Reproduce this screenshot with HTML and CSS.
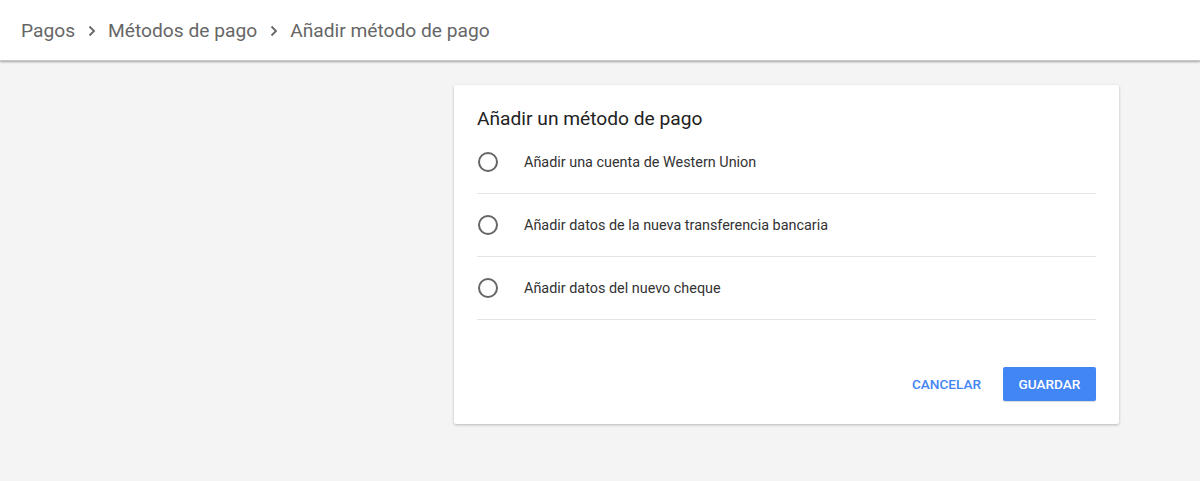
FILE: index.html
```html
<!DOCTYPE html>
<html lang="es">
<head>
<meta charset="utf-8">
<link rel="stylesheet" href="styles.css">
</head>
<body>
<header class="topbar">
  <nav class="crumbs">
    <span class="crumb">Pagos</span>
    <svg class="chev" width="8" height="12" viewBox="0 0 8 12"><path d="M1.5 1.5 L6 6 L1.5 10.5" fill="none" stroke="#666" stroke-width="1.8"/></svg>
    <span class="crumb">Métodos de pago</span>
    <svg class="chev" width="8" height="12" viewBox="0 0 8 12"><path d="M1.5 1.5 L6 6 L1.5 10.5" fill="none" stroke="#666" stroke-width="1.8"/></svg>
    <span class="crumb">Añadir método de pago</span>
  </nav>
</header>
<main class="main">
  <section class="card">
    <h1 class="title">Añadir un método de pago</h1>
    <ul class="options">
      <li class="option"><span class="radio"></span><span class="label">Añadir una cuenta de Western Union</span></li>
      <li class="option"><span class="radio"></span><span class="label">Añadir datos de la nueva transferencia bancaria</span></li>
      <li class="option"><span class="radio"></span><span class="label">Añadir datos del nuevo cheque</span></li>
    </ul>
    <div class="actions">
      <button class="btn btn-flat">CANCELAR</button>
      <button class="btn btn-primary">GUARDAR</button>
    </div>
  </section>
</main>
</body>
</html>
```
FILE: styles.css
```css
html, body {
  margin: 0;
  padding: 0;
  height: 100%;
}
body {
  background: #f4f4f4;
  font-family: Roboto, "Liberation Sans", Arial, sans-serif;
  color: #333;
}
.topbar {
  height: 60px;
  background: #fff;
  box-shadow: 0 1px 2px rgba(0,0,0,0.35);
  border-bottom: 1px solid #c8c8c8;
  display: flex;
  align-items: center;
  padding-left: 21px;
  position: relative;
  z-index: 1;
}
.crumbs {
  display: flex;
  align-items: center;
  font-size: 19.2px;
  color: #666;
}
.chev {
  margin: 1px 12px 0 13px;
}
.main {
  padding: 24px 0 0 454px;
}
.card {
  width: 619px;
  background: #fff;
  padding: 22px 23px 23px 23px;
  box-shadow: 0 1px 3px rgba(0,0,0,0.25);
  border-radius: 2px;
}
.title {
  margin: 0;
  font-size: 19.2px;
  line-height: 24px;
  font-weight: 400;
  color: #222;
}
.options {
  list-style: none;
  margin: 0;
  padding: 0;
}
.option {
  height: 62px;
  border-bottom: 1px solid #e4e4e4;
  display: flex;
  align-items: center;
}
.radio {
  width: 16px;
  height: 16px;
  border: 2px solid #666;
  border-radius: 50%;
  margin-left: 1px;
  margin-right: 26px;
  flex: none;
}
.label {
  font-size: 14.4px;
  color: #333;
}
.actions {
  display: flex;
  justify-content: flex-end;
  align-items: center;
  margin-top: 47px;
  gap: 10px;
}
.btn {
  font-family: Roboto, "Liberation Sans", Arial, sans-serif;
  font-size: 13.6px;
  font-weight: 500;
  height: 34px;
  border: none;
  border-radius: 2px;
  cursor: pointer;
  letter-spacing: 0;
}
.btn-flat {
  background: transparent;
  color: #4285f4;
  padding: 0 12px;
}
.btn-primary {
  background: #4285f4;
  color: #fff;
  padding: 0 15px;
  min-width: 93px;
  box-shadow: 0 1px 1px rgba(0,0,0,0.15);
}
```
